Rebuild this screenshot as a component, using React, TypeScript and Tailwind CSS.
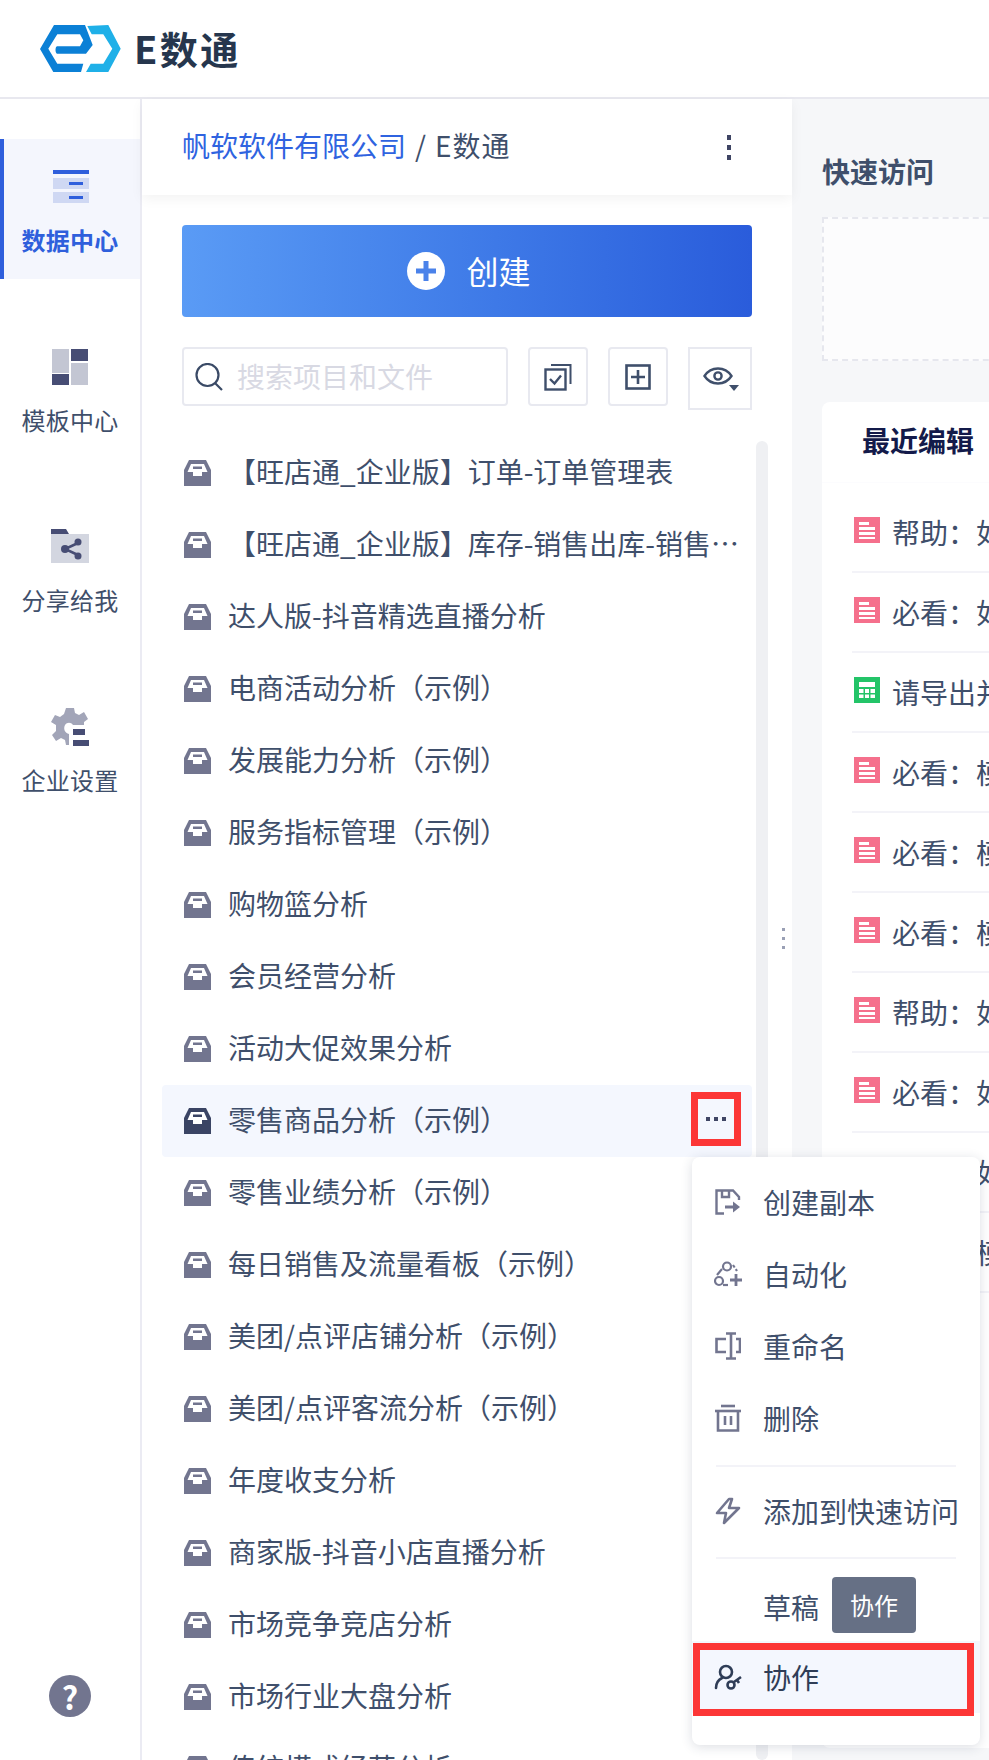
const projects = [
  "【旺店通_企业版】订单-订单管理表",
  "【旺店通_企业版】库存-销售出库-销售出库单明细",
  "达人版-抖音精选直播分析",
  "电商活动分析（示例）",
  "发展能力分析（示例）",
  "服务指标管理（示例）",
  "购物篮分析",
  "会员经营分析",
  "活动大促效果分析",
  "零售商品分析（示例）",
  "零售业绩分析（示例）",
  "每日销售及流量看板（示例）",
  "美团/点评店铺分析（示例）",
  "美团/点评客流分析（示例）",
  "年度收支分析",
  "商家版-抖音小店直播分析",
  "市场竞争竞店分析",
  "市场行业大盘分析",
  "传统模式经营分析",
];

const recent = [
  { kind: "doc", text: "帮助：如何使用" },
  { kind: "doc", text: "必看：如何使用" },
  { kind: "sheet", text: "请导出并" },
  { kind: "doc", text: "必看：模板" },
  { kind: "doc", text: "必看：模板" },
  { kind: "doc", text: "必看：模板" },
  { kind: "doc", text: "帮助：如何" },
  { kind: "doc", text: "必看：如何" },
  { kind: "doc", text: "必看：如何" },
  { kind: "doc", text: "必看：模板" },
];

function Logo() {
  return (
    <svg width="82" height="48" viewBox="0 0 82 48" className="shrink-0">
      <path
        d="M0 24L14 0H45L52.7 20L46 28.7H17C15 28 15 22 17 21.3H40L43.3 15.3L40 9.3H17.3L8.3 23.7L17.3 38.7H43.3L41 47H13.3Z"
        fill="#0b80d6"
      />
      <path
        d="M47.3 1L68.3 0L80.7 23.7L68.3 47H46L50.7 38.7H63.3L72.3 23.7L63.3 9.3H51.7Z"
        fill="#1fb0e8"
      />
    </svg>
  );
}

function DataIcon() {
  return (
    <svg width="36" height="34" viewBox="0 0 36 34" className="ml-[2px]">
      <rect y="0" width="36" height="4" fill="#2f5fdc" />
      <rect y="8" width="36" height="11" fill="#cfd8f3" />
      <rect y="22" width="36" height="11" fill="#cfd8f3" />
      <rect x="16" y="12" width="14" height="3" fill="#2f5fdc" />
      <rect x="16" y="26" width="14" height="3" fill="#2f5fdc" />
    </svg>
  );
}

function TemplateIcon() {
  return (
    <svg width="36" height="36" viewBox="0 0 36 36">
      <rect width="17" height="24" fill="#c3c6d3" />
      <rect x="19" width="17" height="12" fill="#474d74" />
      <rect y="25" width="17" height="11" fill="#474d74" />
      <rect x="19" y="14" width="17" height="22" fill="#c3c6d3" />
    </svg>
  );
}

function ShareIcon() {
  return (
    <svg width="38" height="36" viewBox="0 0 38 36">
      <rect y="5" width="38" height="29" fill="#d3d6e0" />
      <path d="M0 0H15L18 5H0Z" fill="#474d74" />
      <path d="M27 14L14 20L27 26" fill="none" stroke="#474d74" strokeWidth="2.5" />
      <circle cx="27" cy="13" r="3.5" fill="#474d74" />
      <circle cx="14" cy="20" r="4" fill="#474d74" />
      <circle cx="27" cy="27" r="3.5" fill="#474d74" />
    </svg>
  );
}

function SettingIcon() {
  return (
    <svg width="38" height="38" viewBox="0 0 38 38">
      <path
        d="M15 0H23L24 5L28 7L33 4L37 11L33 14V17H22C20 14 16 14 14 17C12 21 14 25 18 26V37H15L14 32L10 30L5 33L1 27L5 23V17L0 14L4 7L9 9L13 6Z"
        fill="#a2a5b8"
      />
      <rect x="22" y="21" width="12" height="6" fill="#474d74" />
      <rect x="22" y="32" width="16" height="6" fill="#474d74" />
    </svg>
  );
}

function InboxIcon({ active }: { active?: boolean }) {
  const fill = active ? "#3a4464" : "#72758f";
  return (
    <svg width="27" height="26" viewBox="0 0 27 26" className="shrink-0">
      <path d="M5 0H22L27 10V26H0V10Z" fill={fill} />
      <path d="M3.5 12L7 4H20L23.5 12H18V16H9V12Z" fill="#fff" />
      <rect x="9" y="6.5" width="9" height="2.5" fill={fill} />
    </svg>
  );
}

function NavItem({
  icon,
  label,
  active,
}: {
  icon: React.ReactNode;
  label: string;
  active?: boolean;
}) {
  return (
    <div
      className={`h-[140px] flex flex-col items-center pt-[29px] ${
        active
          ? "bg-[#f4f6fd] border-l-4 border-[#2f5fdc] text-[#2f5fdc] font-bold pr-[4px]"
          : "text-[#3f4f6b]"
      }`}
    >
      <div className="h-[38px] flex items-center">{icon}</div>
      <span className="mt-[18px] text-[24px] leading-[32px] tracking-[0.3px]">
        {label}
      </span>
    </div>
  );
}

function ToolButton({
  children,
  square,
}: {
  children: React.ReactNode;
  square?: boolean;
}) {
  return (
    <div
      className={
        square
          ? "w-[64px] h-[63px] border-2 border-[#e8e9f0] flex items-center justify-center"
          : "w-[60px] h-[59px] border-2 border-[#e8e9f0] rounded-[4px] flex items-center justify-center"
      }
    >
      {children}
    </div>
  );
}

function MenuItem({ icon, label }: { icon: React.ReactNode; label: string }) {
  return (
    <div className="h-[72px] flex items-center pl-[22px]">
      <div className="w-[28px] flex justify-center">{icon}</div>
      <span className="ml-[21px] pb-[1px] text-[28px] text-[#3f4f6b]">{label}</span>
    </div>
  );
}

const menuStroke = "#72758f";

function CopyIcon() {
  return (
    <svg width="26" height="26" viewBox="0 0 26 26" fill="none" stroke={menuStroke} strokeWidth="2.4">
      <path d="M9 24.5H1.5V1.5H18L24 8V11" />
      <path d="M7 2V8H14V2" />
      <path d="M10 18H20" strokeWidth="3" />
      <path d="M18 12.5L25 18L18 23.5Z" fill={menuStroke} stroke="none" />
    </svg>
  );
}

function AutoIcon() {
  return (
    <svg width="28" height="26" viewBox="0 0 28 26" fill="none" stroke={menuStroke} strokeWidth="2.2">
      <circle cx="13" cy="5.5" r="4" />
      <circle cx="5" cy="20" r="4" />
      <path d="M8 8L3 14" />
      <path d="M19 4L23 10" strokeDasharray="3 2" />
      <path d="M9 24H14" />
      <path d="M22 13V25M16 19H28" strokeWidth="2.8" />
    </svg>
  );
}

function RenameIcon() {
  return (
    <svg width="26" height="28" viewBox="0 0 26 28" fill="none" stroke={menuStroke} strokeWidth="2.6">
      <path d="M11 7H1.5V20H11" />
      <path d="M21 7H25V20H21" />
      <path d="M16 1V27" />
      <path d="M11 1.5H21M11 26.5H21" />
    </svg>
  );
}

function TrashIcon() {
  return (
    <svg width="26" height="28" viewBox="0 0 26 28" fill="none" stroke={menuStroke} strokeWidth="2.6">
      <path d="M0 7H26" />
      <path d="M6 2H20" />
      <path d="M3 7V26.5H23V7" />
      <path d="M10 12V21M16 12V21" />
    </svg>
  );
}

function BoltIcon() {
  return (
    <svg width="26" height="28" viewBox="0 0 26 28" fill="none" stroke={menuStroke} strokeWidth="2.6" strokeLinejoin="round">
      <path d="M14 2L2 16H11L9 26L24 11H14L17 2Z" />
    </svg>
  );
}

function CollabIcon() {
  return (
    <svg width="28" height="26" viewBox="0 0 28 26" fill="none" stroke="#2f3d57" strokeWidth="2.6">
      <circle cx="12" cy="8" r="6" />
      <path d="M2 24C2 19 4 16 8 14" strokeLinecap="round" />
      <circle cx="17" cy="21" r="3.5" />
      <path d="M20 18L27 13M23 16L25 19" />
    </svg>
  );
}

export default function App() {
  return (
    <div className="relative w-[989px] h-[1760px] overflow-hidden bg-white flex flex-col font-['Noto_Sans_CJK_SC','Noto_Sans',sans-serif]">
      <header className="h-[99px] shrink-0 bg-white border-b-2 border-[#e8e8ef] flex items-center pl-[40px]">
        <Logo />
        <span className="ml-[12px] pb-[2px] text-[38px] leading-none font-bold text-[#26364d] tracking-[2.5px]">
          E数通
        </span>
      </header>

      <div className="flex-1 flex min-h-0">
        <nav className="w-[142px] shrink-0 border-r-2 border-[#ebebf3] bg-white flex flex-col pt-[40px] relative">
          <div className="flex flex-col gap-[40px]">
            <NavItem icon={<DataIcon />} label="数据中心" active />
            <NavItem icon={<TemplateIcon />} label="模板中心" />
            <NavItem icon={<ShareIcon />} label="分享给我" />
            <NavItem icon={<SettingIcon />} label="企业设置" />
          </div>
          <div className="mt-auto mb-[43px] mx-auto w-[42px] h-[42px] rounded-full bg-[#72758f] text-white font-bold text-[32px] leading-[42px] text-center">
            ?
          </div>
        </nav>

        <section className="relative w-[650px] shrink-0 bg-white flex flex-col">
          <div className="h-[96px] shrink-0 flex items-center justify-between pl-[40px] pr-[61px] shadow-[0_4px_12px_rgba(0,0,0,0.05)]">
            <div className="pb-[4px] text-[28px] text-[#3f4f6b]">
              <span className="text-[#2f63e0]">帆软软件有限公司</span>
              <span className="mx-[9px]">/</span>
              <span className="tracking-[1px]">E数通</span>
            </div>
            <div className="flex flex-col gap-[5px]">
              <span className="w-[4px] h-[5px] bg-[#3f4564]" />
              <span className="w-[4px] h-[5px] bg-[#3f4564]" />
              <span className="w-[4px] h-[5px] bg-[#3f4564]" />
            </div>
          </div>

          <div className="mt-[30px] ml-[40px] w-[570px] h-[92px] shrink-0 rounded-[4px] bg-gradient-to-r from-[#5a9bf5] to-[#2a5cdb] flex items-center justify-center gap-[21px]">
            <svg width="38" height="38" viewBox="0 0 38 38" className="ml-[4px]">
              <circle cx="19" cy="19" r="19" fill="#fff" />
              <path d="M19 9V29M9 19H29" stroke="#4a82ea" strokeWidth="5" />
            </svg>
            <span className="pb-[3px] text-[32px] text-white">创建</span>
          </div>

          <div className="mt-[30px] ml-[40px] w-[570px] flex items-start shrink-0">
            <div className="w-[326px] h-[59px] border-2 border-[#e8e9f0] rounded-[4px] flex items-center pl-[11px]">
              <svg width="28" height="28" viewBox="0 0 28 28" fill="none" stroke="#3a4a66" strokeWidth="2.2">
                <circle cx="12.5" cy="12" r="11" />
                <path d="M20 20L27 27" />
              </svg>
              <span className="ml-[14px] pb-[2px] text-[28px] text-[#d8d9e3]">搜索项目和文件</span>
            </div>
            <div className="ml-[20px]">
              <ToolButton>
                <svg width="28" height="28" viewBox="0 0 28 28" fill="none" stroke="#3f4f6b" strokeWidth="2.4">
                  <rect x="1.5" y="6.5" width="20" height="20" />
                  <path d="M7 2H26.5V21" strokeWidth="2" />
                  <path d="M6 16L10.5 20.5L17 12.5" />
                </svg>
              </ToolButton>
            </div>
            <div className="ml-[20px]">
              <ToolButton>
                <svg width="26" height="26" viewBox="0 0 26 26" fill="none" stroke="#3f4f6b" strokeWidth="2.6">
                  <rect x="1.5" y="1.5" width="23" height="23" />
                  <path d="M13 6V20M6 13H20" />
                </svg>
              </ToolButton>
            </div>
            <div className="ml-[20px]">
              <ToolButton square>
                <svg width="36" height="30" viewBox="0 0 36 30" className="ml-[2px] mt-[3px]" fill="none" stroke="#3f4f6b" strokeWidth="2.4">
                  <path d="M1.5 11C8 1 22 1 28.5 11C22 21 8 21 1.5 11Z" />
                  <circle cx="15" cy="11" r="3.6" />
                  <path d="M26 20H36L31 26Z" fill="#3f4f6b" stroke="none" />
                </svg>
              </ToolButton>
            </div>
          </div>

          <div className="mt-[27px] ml-[20px] flex flex-1 min-h-0 overflow-hidden">
            <div className="w-[590px] shrink-0">
              {projects.map((name, i) => (
                <div
                  key={i}
                  className={`h-[72px] flex items-center pl-[22px] rounded-[4px] ${
                    i === 9 ? "bg-[#f4f7fe]" : ""
                  }`}
                >
                  <InboxIcon active={i === 9} />
                  <span className="ml-[17px] pb-[4px] text-[28px] text-[#3f4f6b] truncate w-[522px]">
                    {name}
                  </span>
                </div>
              ))}
            </div>
            <div className="ml-[4px] mt-[4px] w-[12px] rounded-full bg-[#eff0f3]" />
          </div>

          {/* resize handle */}
          <div className="absolute left-[640px] top-[829px] flex flex-col gap-[6px]">
            <span className="w-[3px] h-[3px] bg-[#9aa0b5]" />
            <span className="w-[3px] h-[3px] bg-[#9aa0b5]" />
            <span className="w-[3px] h-[3px] bg-[#9aa0b5]" />
          </div>
        </section>

        <main className="flex-1 bg-[#f6f7f9] pl-[30px] min-w-0 overflow-hidden">
          <div className="w-[800px]">
            <h2 className="mt-[52px] text-[28px] leading-[40px] font-bold text-[#3f4f6b]">
              快速访问
            </h2>
            <div className="mt-[26px] h-[144px] border-2 border-dashed border-[#e6e7ee] bg-[#fcfcfd]" />
            <div className="mt-[41px] h-[1346px] rounded-[8px] bg-white">
              <div className="h-[81px] border-b border-[#fcfcfe] pl-[40px] pb-[4px] flex items-center text-[28px] font-bold text-[#131a4a]">
                最近编辑
              </div>
              <div className="pl-[30px] pt-[10px]">
                {recent.map((row, i) => (
                  <div
                    key={i}
                    className="h-[80px] border-b-2 border-[#f3f3f8] flex items-center pl-[2px]"
                  >
                    {row.kind === "doc" ? (
                      <svg width="26" height="26" viewBox="0 0 26 26" className="shrink-0 -mt-[4px]">
                        <rect width="26" height="26" fill="#f5708c" />
                        <rect x="5" y="5" width="10" height="3" fill="#fff" />
                        <rect x="5" y="10" width="16" height="3" fill="#fff" />
                        <rect x="5" y="15" width="16" height="3" fill="#fff" />
                        <rect x="5" y="20" width="16" height="2" fill="#fff" />
                      </svg>
                    ) : (
                      <svg width="26" height="26" viewBox="0 0 26 26" className="shrink-0 -mt-[4px]">
                        <rect width="26" height="26" fill="#23c468" />
                        <rect x="5" y="5" width="16" height="5" fill="#fff" />
                        <path d="M5 12H9.5V16H5ZM11 12H15V16H11ZM16.5 12H21V16H16.5ZM5 17.5H9.5V21H5ZM11 17.5H15V21H11ZM16.5 17.5H21V21H16.5Z" fill="#fff" />
                      </svg>
                    )}
                    <span className="ml-[12px] text-[28px] text-[#3f4f6b] whitespace-nowrap">
                      {row.text}
                    </span>
                  </div>
                ))}
              </div>
            </div>
          </div>
        </main>
      </div>

      {/* red annotation round the row's more button */}
      <div className="absolute left-[691px] top-[1092px] w-[50px] h-[54px] border-[7px] border-[#fc3636] flex items-center justify-center gap-[4px] bg-[#f4f7fe]">
        <span className="w-[4px] h-[4px] bg-[#3f4564]" />
        <span className="w-[4px] h-[4px] bg-[#3f4564]" />
        <span className="w-[4px] h-[4px] bg-[#3f4564]" />
      </div>

      {/* popup menu */}
      <div className="absolute left-[692px] top-[1157px] w-[288px] h-[588px] bg-white rounded-[8px] shadow-[0_2px_12px_rgba(40,50,80,0.16)] pt-[9px]">
        <MenuItem icon={<CopyIcon />} label="创建副本" />
        <MenuItem icon={<AutoIcon />} label="自动化" />
        <MenuItem icon={<RenameIcon />} label="重命名" />
        <MenuItem icon={<TrashIcon />} label="删除" />
        <div className="mx-[24px] mt-[11px] mb-[8px] h-[2px] bg-[#f3f3f8]" />
        <MenuItem icon={<BoltIcon />} label="添加到快速访问" />
        <div className="mx-[24px] mt-[10px] h-[2px] bg-[#f3f3f8]" />
        <div className="mt-[18px] h-[56px] pl-[71px] flex items-center">
          <span className="mt-[4px] text-[28px] text-[#3f4f6b]">草稿</span>
          <span className="ml-[13px] w-[84px] h-[56px] rounded-[4px] bg-[#667085] text-white text-[24px] flex items-center justify-center">
            协作
          </span>
        </div>
        <div className="mt-[8px] h-[72px] bg-[#f4f7fe] flex items-center pl-[22px]">
          <CollabIcon />
          <span className="ml-[21px] pb-[1px] text-[28px] text-[#2f3d57]">协作</span>
        </div>
      </div>

      {/* red annotation round the collaborate item */}
      <div className="absolute left-[693px] top-[1643px] w-[281px] h-[73px] border-[7px] border-[#fc3636]" />
    </div>
  );
}
